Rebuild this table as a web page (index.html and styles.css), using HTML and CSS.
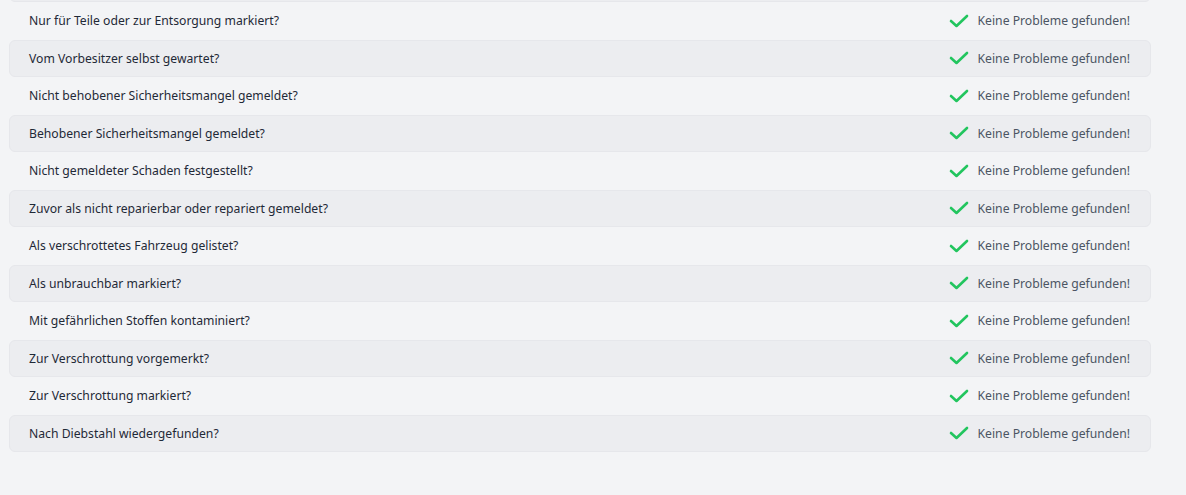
FILE: index.html
```html
<!DOCTYPE html>
<html lang="de">
<head>
<meta charset="utf-8">
<title>Prüfbericht</title>
<link rel="stylesheet" href="styles.css">
</head>
<body>
<div class="page">
  <ul class="checks">
    <li class="row alt" aria-hidden="true"></li>
    <li class="row"><span class="q">Nur für Teile oder zur Entsorgung markiert?</span><span class="ok"><svg class="tick" viewBox="0 0 20 14"><polyline points="2,7 7.5,12 18,2"/></svg>Keine Probleme gefunden!</span></li>
    <li class="row alt"><span class="q">Vom Vorbesitzer selbst gewartet?</span><span class="ok"><svg class="tick" viewBox="0 0 20 14"><polyline points="2,7 7.5,12 18,2"/></svg>Keine Probleme gefunden!</span></li>
    <li class="row"><span class="q">Nicht behobener Sicherheitsmangel gemeldet?</span><span class="ok"><svg class="tick" viewBox="0 0 20 14"><polyline points="2,7 7.5,12 18,2"/></svg>Keine Probleme gefunden!</span></li>
    <li class="row alt"><span class="q">Behobener Sicherheitsmangel gemeldet?</span><span class="ok"><svg class="tick" viewBox="0 0 20 14"><polyline points="2,7 7.5,12 18,2"/></svg>Keine Probleme gefunden!</span></li>
    <li class="row"><span class="q">Nicht gemeldeter Schaden festgestellt?</span><span class="ok"><svg class="tick" viewBox="0 0 20 14"><polyline points="2,7 7.5,12 18,2"/></svg>Keine Probleme gefunden!</span></li>
    <li class="row alt"><span class="q">Zuvor als nicht reparierbar oder repariert gemeldet?</span><span class="ok"><svg class="tick" viewBox="0 0 20 14"><polyline points="2,7 7.5,12 18,2"/></svg>Keine Probleme gefunden!</span></li>
    <li class="row"><span class="q">Als verschrottetes Fahrzeug gelistet?</span><span class="ok"><svg class="tick" viewBox="0 0 20 14"><polyline points="2,7 7.5,12 18,2"/></svg>Keine Probleme gefunden!</span></li>
    <li class="row alt"><span class="q">Als unbrauchbar markiert?</span><span class="ok"><svg class="tick" viewBox="0 0 20 14"><polyline points="2,7 7.5,12 18,2"/></svg>Keine Probleme gefunden!</span></li>
    <li class="row"><span class="q">Mit gefährlichen Stoffen kontaminiert?</span><span class="ok"><svg class="tick" viewBox="0 0 20 14"><polyline points="2,7 7.5,12 18,2"/></svg>Keine Probleme gefunden!</span></li>
    <li class="row alt"><span class="q">Zur Verschrottung vorgemerkt?</span><span class="ok"><svg class="tick" viewBox="0 0 20 14"><polyline points="2,7 7.5,12 18,2"/></svg>Keine Probleme gefunden!</span></li>
    <li class="row"><span class="q">Zur Verschrottung markiert?</span><span class="ok"><svg class="tick" viewBox="0 0 20 14"><polyline points="2,7 7.5,12 18,2"/></svg>Keine Probleme gefunden!</span></li>
    <li class="row alt"><span class="q">Nach Diebstahl wiedergefunden?</span><span class="ok"><svg class="tick" viewBox="0 0 20 14"><polyline points="2,7 7.5,12 18,2"/></svg>Keine Probleme gefunden!</span></li>
  </ul>
</div>
</body>
</html>
```

FILE: styles.css
```css
html, body {
  margin: 0;
  padding: 0;
  background: #f3f4f6;
}
body {
  font-family: "Noto Sans", "Open Sans", sans-serif;
  font-size: 12.2px;
  color: #1f2937;
  overflow: hidden;
  height: 495px;
}
.page {
  padding: 0 35px 0 9px;
}
.checks {
  list-style: none;
  margin: -35.5px 0 0 0;
  padding: 0;
}
.row {
  display: flex;
  align-items: center;
  justify-content: space-between;
  box-sizing: border-box;
  height: 37.5px;
  padding: 0 20px 0 19px;
  border: 1px solid transparent;
  border-radius: 6px;
}
.row.alt {
  background: #ecedf0;
  border-color: #e6e7eb;
}
.q {
  color: #1f2937;
}
.ok {
  display: flex;
  align-items: center;
  gap: 9px;
  color: #4b5563;
}
.tick {
  width: 20px;
  height: 14px;
  fill: none;
  stroke: #22c55e;
  stroke-width: 2.6;
  stroke-linecap: round;
  stroke-linejoin: round;
}
```
